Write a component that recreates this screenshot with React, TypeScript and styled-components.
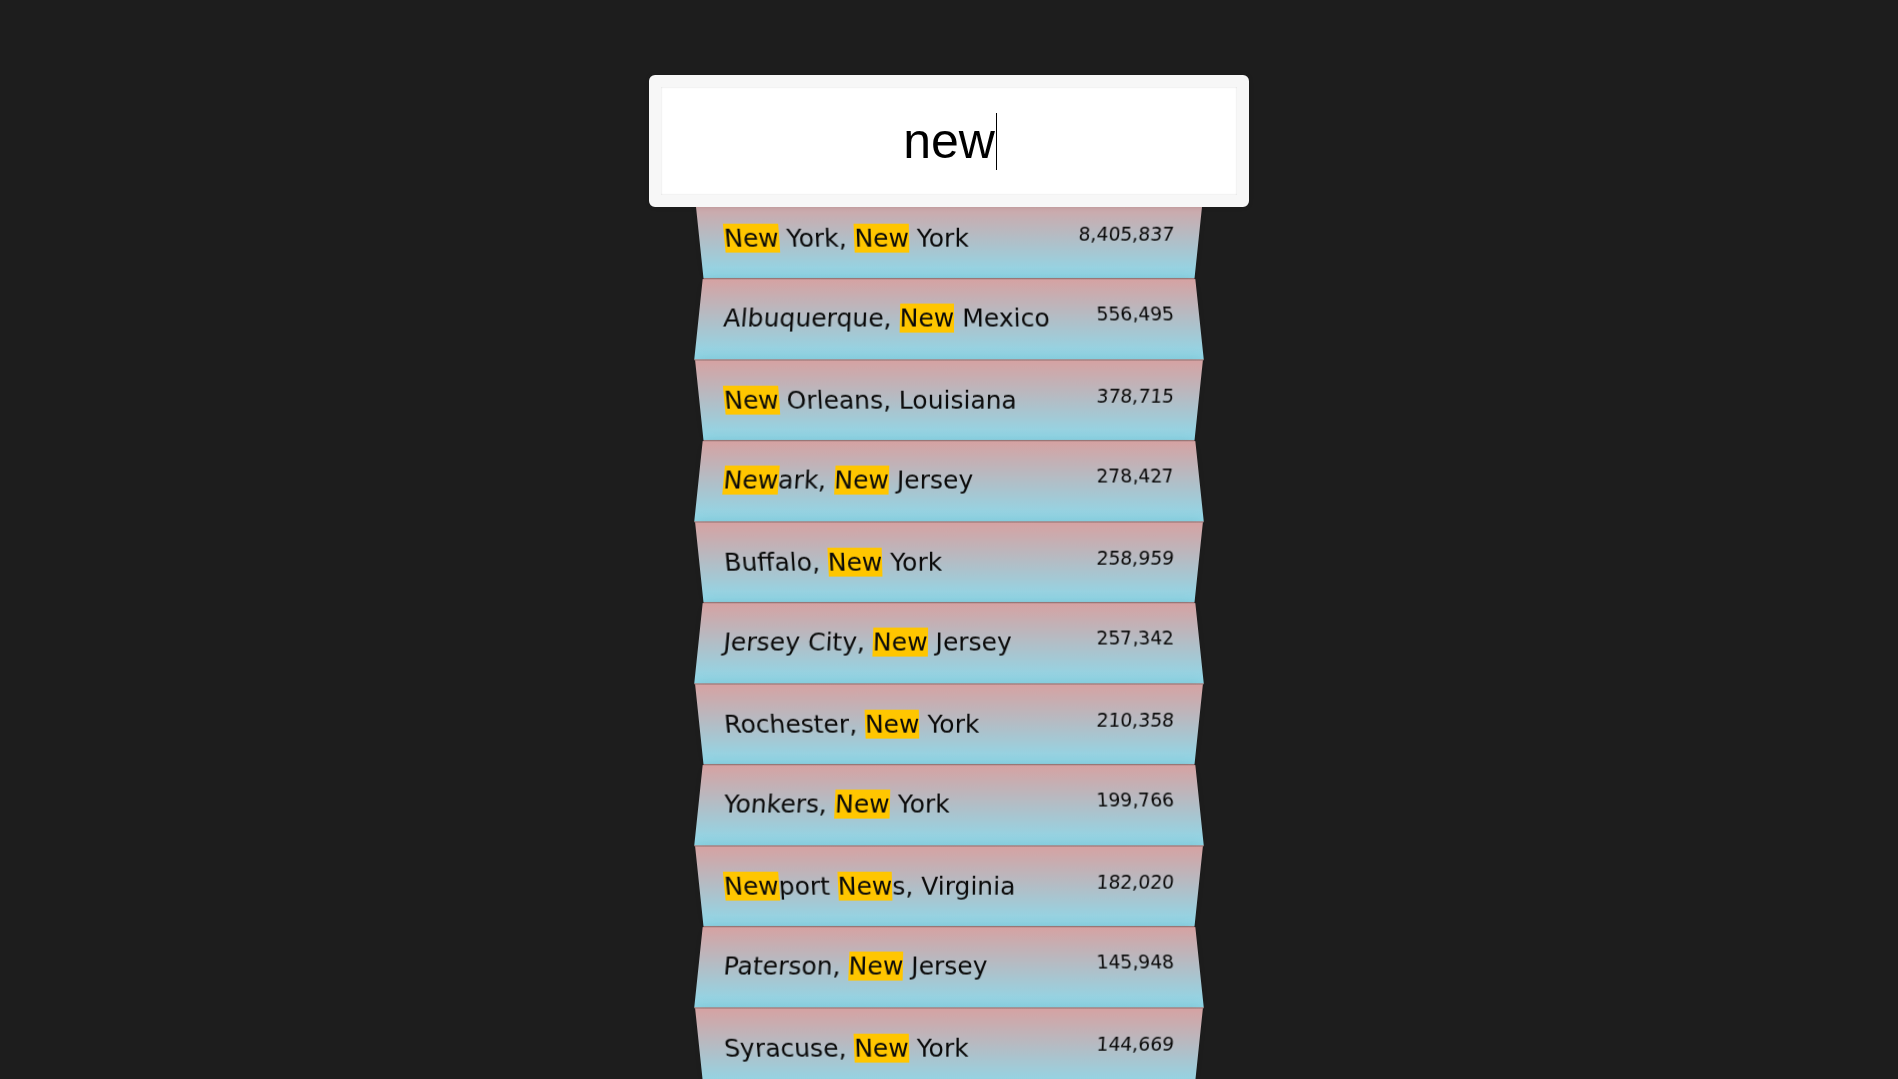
import React, { useEffect, useLayoutEffect, useRef, useState } from "react";
import styled, { createGlobalStyle, keyframes } from "styled-components";

type City = { city: string; state: string; population: number };

const CITIES: City[] = [
  { city: "New York", state: "New York", population: 8405837 },
  { city: "Los Angeles", state: "California", population: 3884307 },
  { city: "Chicago", state: "Illinois", population: 2718782 },
  { city: "Albuquerque", state: "New Mexico", population: 556495 },
  { city: "New Orleans", state: "Louisiana", population: 378715 },
  { city: "Newark", state: "New Jersey", population: 278427 },
  { city: "Buffalo", state: "New York", population: 258959 },
  { city: "Jersey City", state: "New Jersey", population: 257342 },
  { city: "Rochester", state: "New York", population: 210358 },
  { city: "Yonkers", state: "New York", population: 199766 },
  { city: "Newport News", state: "Virginia", population: 182020 },
  { city: "Paterson", state: "New Jersey", population: 145948 },
  { city: "Syracuse", state: "New York", population: 144669 },
  { city: "New Haven", state: "Connecticut", population: 130660 },
  { city: "Elizabeth", state: "New Jersey", population: 127558 },
  { city: "Manchester", state: "New Hampshire", population: 110378 },
];

const INPUT_FONT = '400 50px "Liberation Sans", Arial, sans-serif';

const GlobalStyle = createGlobalStyle`
  html {
    box-sizing: border-box;
    background: #1d1d1d;
    font-family: "DejaVu Sans", "Noto Sans", sans-serif;
    font-size: 25px;
    font-weight: 400;
  }
  *, *::before, *::after { box-sizing: inherit; }
  body { margin: 0; background: #1d1d1d; }
`;

const SearchForm = styled.form`
  max-width: 500px;
  margin: 62.5px auto;
`;

const InputWrap = styled.div`
  position: relative;
  left: -10%;
  top: 12.5px;
  z-index: 2;
  width: 120%;
`;

const SearchInput = styled.input`
  display: block;
  width: 100%;
  margin: 0;
  padding: 25px;
  text-align: center;
  outline: 0;
  border: 12.5px solid #f7f7f7;
  border-radius: 6px;
  background: #ffffff;
  color: #000000;
  caret-color: transparent;
  font: ${INPUT_FONT};
  box-shadow: 0 0 5px rgba(0, 0, 0, 0.12), inset 0 0 2px rgba(0, 0, 0, 0.19);
`;

const blink = keyframes`
  0%, 49% { opacity: 1; }
  50%, 100% { opacity: 1; }
`;

const Caret = styled.span`
  position: absolute;
  top: 38px;
  width: 1px;
  height: 57px;
  background: #000000;
  pointer-events: none;
  animation: ${blink} 1s step-end infinite;
`;

const Suggestions = styled.ul`
  margin: 0;
  padding: 0;
  position: relative;
`;

const Suggestion = styled.li<{ $even: boolean }>`
  list-style: none;
  margin: 0;
  padding: 25px;
  display: flex;
  justify-content: space-between;
  text-transform: capitalize;
  line-height: 30px;
  color: #0a0a0a;
  border-bottom: 1.25px solid rgba(150, 120, 120, 0.55);
  box-shadow: 0 0 12px rgba(0, 0, 0, 0.14);
  background: linear-gradient(to bottom, #d6a2a2 0%, #8ed9ea 100%);
  transform: ${(p) =>
    p.$even
      ? "perspective(125px) rotateX(3deg) translateY(2.5px) scale(1.001)"
      : "perspective(125px) rotateX(-3deg) translateY(3.75px)"};
`;

const Name = styled.span``;

const Population = styled.span`
  font-size: 18.75px;
  line-height: 22px;
`;

const Highlight = styled.span`
  background: #ffc600;
`;

function escapeRe(s: string) {
  return s.replace(/[.*+?^${}()|[\]\\]/g, "\\$&");
}

function highlight(text: string, query: string) {
  if (!query) return [text];
  const re = new RegExp(`(${escapeRe(query)})`, "gi");
  return text.split(re).map((part, i) =>
    i % 2 === 1 ? (
      <Highlight key={i}>{part}</Highlight>
    ) : (
      <React.Fragment key={i}>{part}</React.Fragment>
    )
  );
}

function measure(text: string) {
  const canvas = document.createElement("canvas");
  const ctx = canvas.getContext("2d");
  if (!ctx) return text.length * 30;
  ctx.font = INPUT_FONT;
  return ctx.measureText(text).width;
}

export default function App() {
  const [query, setQuery] = useState("new");
  const [focused, setFocused] = useState(true);
  const [textWidth, setTextWidth] = useState(0);
  const ref = useRef<HTMLInputElement>(null);

  useEffect(() => {
    const el = ref.current;
    if (el) {
      el.focus();
      el.setSelectionRange(el.value.length, el.value.length);
    }
  }, []);

  useLayoutEffect(() => {
    setTextWidth(measure(query));
  }, [query]);

  const matches = query
    ? CITIES.filter((c) => {
        const re = new RegExp(escapeRe(query), "i");
        return re.test(c.city) || re.test(c.state);
      })
    : [];

  return (
    <>
      <GlobalStyle />
      <SearchForm onSubmit={(e) => e.preventDefault()}>
        <InputWrap>
          <SearchInput
            ref={ref}
            type="text"
            value={query}
            onChange={(e) => setQuery(e.target.value)}
            onFocus={() => setFocused(true)}
            onBlur={() => setFocused(false)}
            placeholder="City or State"
          />
          {focused && <Caret style={{ left: `calc(50% + ${textWidth / 2 + 1}px)` }} />}
        </InputWrap>
        <Suggestions>
          {matches.map((c, i) => (
            <Suggestion key={c.city + c.state} $even={i % 2 === 1}>
              <Name>{highlight(`${c.city}, ${c.state}`, query)}</Name>
              <Population>{c.population.toLocaleString("en-US")}</Population>
            </Suggestion>
          ))}
        </Suggestions>
      </SearchForm>
    </>
  );
}
